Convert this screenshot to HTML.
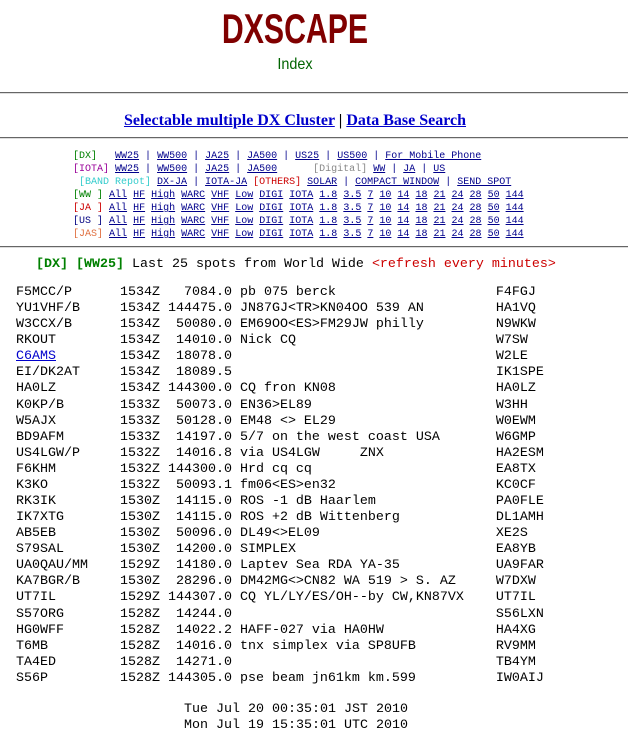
<!DOCTYPE html>
<html><head><meta charset="utf-8"><style>
body{margin:0;width:628px;height:740px;background:#fff;position:relative;overflow:hidden}
.a{position:absolute}
hr{position:absolute;left:0;width:628px;margin:0;border:0;border-top:1px solid #666;border-bottom:1px solid #ddd;height:0}
pre{margin:0;font-family:"Liberation Mono",monospace}
a{color:#00008b;text-decoration:underline}
.b{font-size:10px;line-height:13px;color:#00008b}
.b a{color:#00008b}
.s{font-size:13.33px;line-height:16.08px;color:#000}
</style></head><body>
<div class="a" style="left:0;width:590px;top:5px;text-align:center;font:bold 42px 'Liberation Sans',sans-serif;color:#800000;transform:scaleX(0.72);transform-origin:295px 0">DXSCAPE</div>
<div class="a" style="left:0;width:590px;top:56px;text-align:center;font:16px 'Liberation Sans',sans-serif;color:#006400;transform:scaleX(0.9);transform-origin:295px 0">Index</div>
<hr style="top:92px">
<div class="a" style="left:0;width:590px;top:112px;text-align:center;font:bold 16px 'Liberation Serif',serif"><a href="#" style="color:#0000cc">Selectable multiple DX Cluster</a> | <a href="#" style="color:#0000cc">Data Base Search</a></div>
<hr style="top:137px">
<pre class="a b" style="left:73px;top:150px"><span style="color:#008000">[DX]</span>   <a href="#">WW25</a> | <a href="#">WW500</a> | <a href="#">JA25</a> | <a href="#">JA500</a> | <a href="#">US25</a> | <a href="#">US500</a> | <a href="#">For Mobile Phone</a>
<span style="color:#990099">[IOTA]</span> <a href="#">WW25</a> | <a href="#">WW500</a> | <a href="#">JA25</a> | <a href="#">JA500</a>      <span style="color:#888">[Digital]</span> <a href="#">WW</a> | <a href="#">JA</a> | <a href="#">US</a>
 <span style="color:#33cccc">[BAND Repot]</span> <a href="#">DX-JA</a> | <a href="#">IOTA-JA</a> <span style="color:#cc0000">[OTHERS]</span> <a href="#">SOLAR</a> | <a href="#">COMPACT WINDOW</a> | <a href="#">SEND SPOT</a>
<span style="color:#008000">[WW ]</span> <a href="#">All</a> <a href="#">HF</a> <a href="#">High</a> <a href="#">WARC</a> <a href="#">VHF</a> <a href="#">Low</a> <a href="#">DIGI</a> <a href="#">IOTA</a> <a href="#">1.8</a> <a href="#">3.5</a> <a href="#">7</a> <a href="#">10</a> <a href="#">14</a> <a href="#">18</a> <a href="#">21</a> <a href="#">24</a> <a href="#">28</a> <a href="#">50</a> <a href="#">144</a>
<span style="color:#cc0000">[JA ]</span> <a href="#">All</a> <a href="#">HF</a> <a href="#">High</a> <a href="#">WARC</a> <a href="#">VHF</a> <a href="#">Low</a> <a href="#">DIGI</a> <a href="#">IOTA</a> <a href="#">1.8</a> <a href="#">3.5</a> <a href="#">7</a> <a href="#">10</a> <a href="#">14</a> <a href="#">18</a> <a href="#">21</a> <a href="#">24</a> <a href="#">28</a> <a href="#">50</a> <a href="#">144</a>
<span style="color:#000080">[US ]</span> <a href="#">All</a> <a href="#">HF</a> <a href="#">High</a> <a href="#">WARC</a> <a href="#">VHF</a> <a href="#">Low</a> <a href="#">DIGI</a> <a href="#">IOTA</a> <a href="#">1.8</a> <a href="#">3.5</a> <a href="#">7</a> <a href="#">10</a> <a href="#">14</a> <a href="#">18</a> <a href="#">21</a> <a href="#">24</a> <a href="#">28</a> <a href="#">50</a> <a href="#">144</a>
<span style="color:#e07040">[JAS]</span> <a href="#">All</a> <a href="#">HF</a> <a href="#">High</a> <a href="#">WARC</a> <a href="#">VHF</a> <a href="#">Low</a> <a href="#">DIGI</a> <a href="#">IOTA</a> <a href="#">1.8</a> <a href="#">3.5</a> <a href="#">7</a> <a href="#">10</a> <a href="#">14</a> <a href="#">18</a> <a href="#">21</a> <a href="#">24</a> <a href="#">28</a> <a href="#">50</a> <a href="#">144</a></pre>
<hr style="top:246px">
<pre class="a s" style="left:36px;top:257px"><b style="color:#008000">[DX] [WW25]</b> Last 25 spots from World Wide <span style="color:#cc0000">&lt;refresh every minutes&gt;</span></pre>
<pre class="a s" style="left:16px;top:285px">F5MCC/P      1534Z   7084.0 pb 075 berck                    F4FGJ
YU1VHF/B     1534Z 144475.0 JN87GJ&lt;TR&gt;KN04OO 539 AN         HA1VQ
W3CCX/B      1534Z  50080.0 EM69OO&lt;ES&gt;FM29JW philly         N9WKW
RKOUT        1534Z  14010.0 Nick CQ                         W7SW
<a href="#" style="color:#0000cc">C6AMS</a>        1534Z  18078.0                                 W2LE
EI/DK2AT     1534Z  18089.5                                 IK1SPE
HA0LZ        1534Z 144300.0 CQ fron KN08                    HA0LZ
K0KP/B       1533Z  50073.0 EN36&gt;EL89                       W3HH
W5AJX        1533Z  50128.0 EM48 &lt;&gt; EL29                    W0EWM
BD9AFM       1533Z  14197.0 5/7 on the west coast USA       W6GMP
US4LGW/P     1532Z  14016.8 via US4LGW     ZNX              HA2ESM
F6KHM        1532Z 144300.0 Hrd cq cq                       EA8TX
K3KO         1532Z  50093.1 fm06&lt;ES&gt;en32                    KC0CF
RK3IK        1530Z  14115.0 ROS -1 dB Haarlem               PA0FLE
IK7XTG       1530Z  14115.0 ROS +2 dB Wittenberg            DL1AMH
AB5EB        1530Z  50096.0 DL49&lt;&gt;EL09                      XE2S
S79SAL       1530Z  14200.0 SIMPLEX                         EA8YB
UA0QAU/MM    1529Z  14180.0 Laptev Sea RDA YA-35            UA9FAR
KA7BGR/B     1530Z  28296.0 DM42MG&lt;&gt;CN82 WA 519 &gt; S. AZ     W7DXW
UT7IL        1529Z 144307.0 CQ YL/LY/ES/OH--by CW,KN87VX    UT7IL
S57ORG       1528Z  14244.0                                 S56LXN
HG0WFF       1528Z  14022.2 HAFF-027 via HA0HW              HA4XG
T6MB         1528Z  14016.0 tnx simplex via SP8UFB          RV9MM
TA4ED        1528Z  14271.0                                 TB4YM
S56P         1528Z 144305.0 pse beam jn61km km.599          IW0AIJ</pre>
<pre class="a s" style="left:184px;top:702px;line-height:16px">Tue Jul 20 00:35:01 JST 2010
Mon Jul 19 15:35:01 UTC 2010</pre>
</body></html>
